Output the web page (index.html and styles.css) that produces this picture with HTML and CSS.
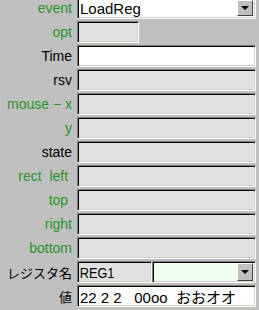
FILE: index.html
```html
<!DOCTYPE html>
<html lang="ja">
<head>
    <meta charset="UTF-8">
    <title>Event</title>
    <link rel="stylesheet" href="styles.css">
</head>
<body>
    <div class="form">
        <div class="row">
            <div class="label green">event</div>
            <div class="field white combo">
                <span class="value big">LoadReg</span>
                <span class="drop"><span class="arrow"></span></span>
            </div>
        </div>
        <div class="row">
            <div class="label green">opt</div>
            <div class="field short"></div>
        </div>
        <div class="row">
            <div class="label">Time</div>
            <div class="field white"></div>
        </div>
        <div class="row">
            <div class="label">rsv</div>
            <div class="field"></div>
        </div>
        <div class="row">
            <div class="label green">mouse &minus; x</div>
            <div class="field"></div>
        </div>
        <div class="row">
            <div class="label green">y</div>
            <div class="field"></div>
        </div>
        <div class="row">
            <div class="label">state</div>
            <div class="field"></div>
        </div>
        <div class="row">
            <div class="label green">rect&nbsp; left&nbsp;</div>
            <div class="field"></div>
        </div>
        <div class="row">
            <div class="label green">top&nbsp;</div>
            <div class="field"></div>
        </div>
        <div class="row">
            <div class="label green">right</div>
            <div class="field"></div>
        </div>
        <div class="row">
            <div class="label green">bottom</div>
            <div class="field"></div>
        </div>
        <div class="row">
            <div class="label cjk">レジスタ名</div>
            <div class="pair">
                <div class="field reg"><span class="value narrow">REG1</span></div>
                <div class="field mint combo">
                    <span class="value"></span>
                    <span class="drop tall"><span class="arrow"></span></span>
                </div>
            </div>
        </div>
        <div class="row">
            <div class="label cjk">値</div>
            <div class="field white"><span class="value val">22 2 2&nbsp;&nbsp; 00oo&nbsp; おおオオ</span></div>
        </div>
    </div>
</body>
</html>
```

FILE: styles.css
```css
body {
    margin: 0;
    background-color: #c0c0c0;
    font-family: "Liberation Sans", "Noto Sans CJK JP", sans-serif;
    overflow: hidden;
}
.form {
    display: flex;
    flex-direction: column;
    gap: 2px;
    margin-top: -3px;
    width: 256px;
}
.row {
    display: flex;
    align-items: stretch;
    gap: 5px;
    height: 22px;
}
.label {
    width: 72px;
    flex: none;
    display: flex;
    align-items: center;
    justify-content: flex-end;
    font-size: 14px;
    color: #000;
    white-space: nowrap;
}
.label.green {
    color: #2a922a;
}
.label.cjk {
    font-family: "Noto Sans CJK JP", sans-serif;
    font-size: 13px;
}
.field {
    flex: 1;
    box-sizing: border-box;
    background-color: #e0e0e0;
    border: 1px solid;
    border-color: #808080 #ffffff #ffffff #808080;
    box-shadow: inset 1px 1px #000, inset -1px -1px #d4d0c8;
    display: flex;
    align-items: center;
    overflow: hidden;
}
.field.white {
    background-color: #fff;
}
.field.short {
    flex: none;
    width: 62px;
}
.field.mint {
    background-color: #efffef;
}
.value {
    flex: 1;
    padding-left: 2px;
    font-size: 13px;
    color: #000;
    white-space: nowrap;
}
.value.big {
    font-size: 15px;
}
.value.narrow {
    font-family: "Liberation Sans Narrow", "Liberation Sans", sans-serif;
    font-size: 15px;
    transform: scaleX(0.85);
    transform-origin: left center;
}
.value.val {
    font-family: "Liberation Sans", "Noto Sans CJK JP", sans-serif;
    font-size: 15px;
}
.pair {
    flex: 1;
    display: flex;
}
.field.reg {
    flex: none;
    width: 75px;
}
.drop {
    flex: none;
    width: 16px;
    height: 16px;
    margin-right: 2px;
    box-sizing: border-box;
    background-color: #c0c0c0;
    border: 1px solid;
    border-color: #ffffff #404040 #404040 #ffffff;
    display: flex;
    align-items: center;
    justify-content: center;
}
.drop.tall {
    height: 18px;
}
.arrow {
    width: 0;
    height: 0;
    border-left: 4px solid transparent;
    border-right: 4px solid transparent;
    border-top: 4px solid #000;
}
```
